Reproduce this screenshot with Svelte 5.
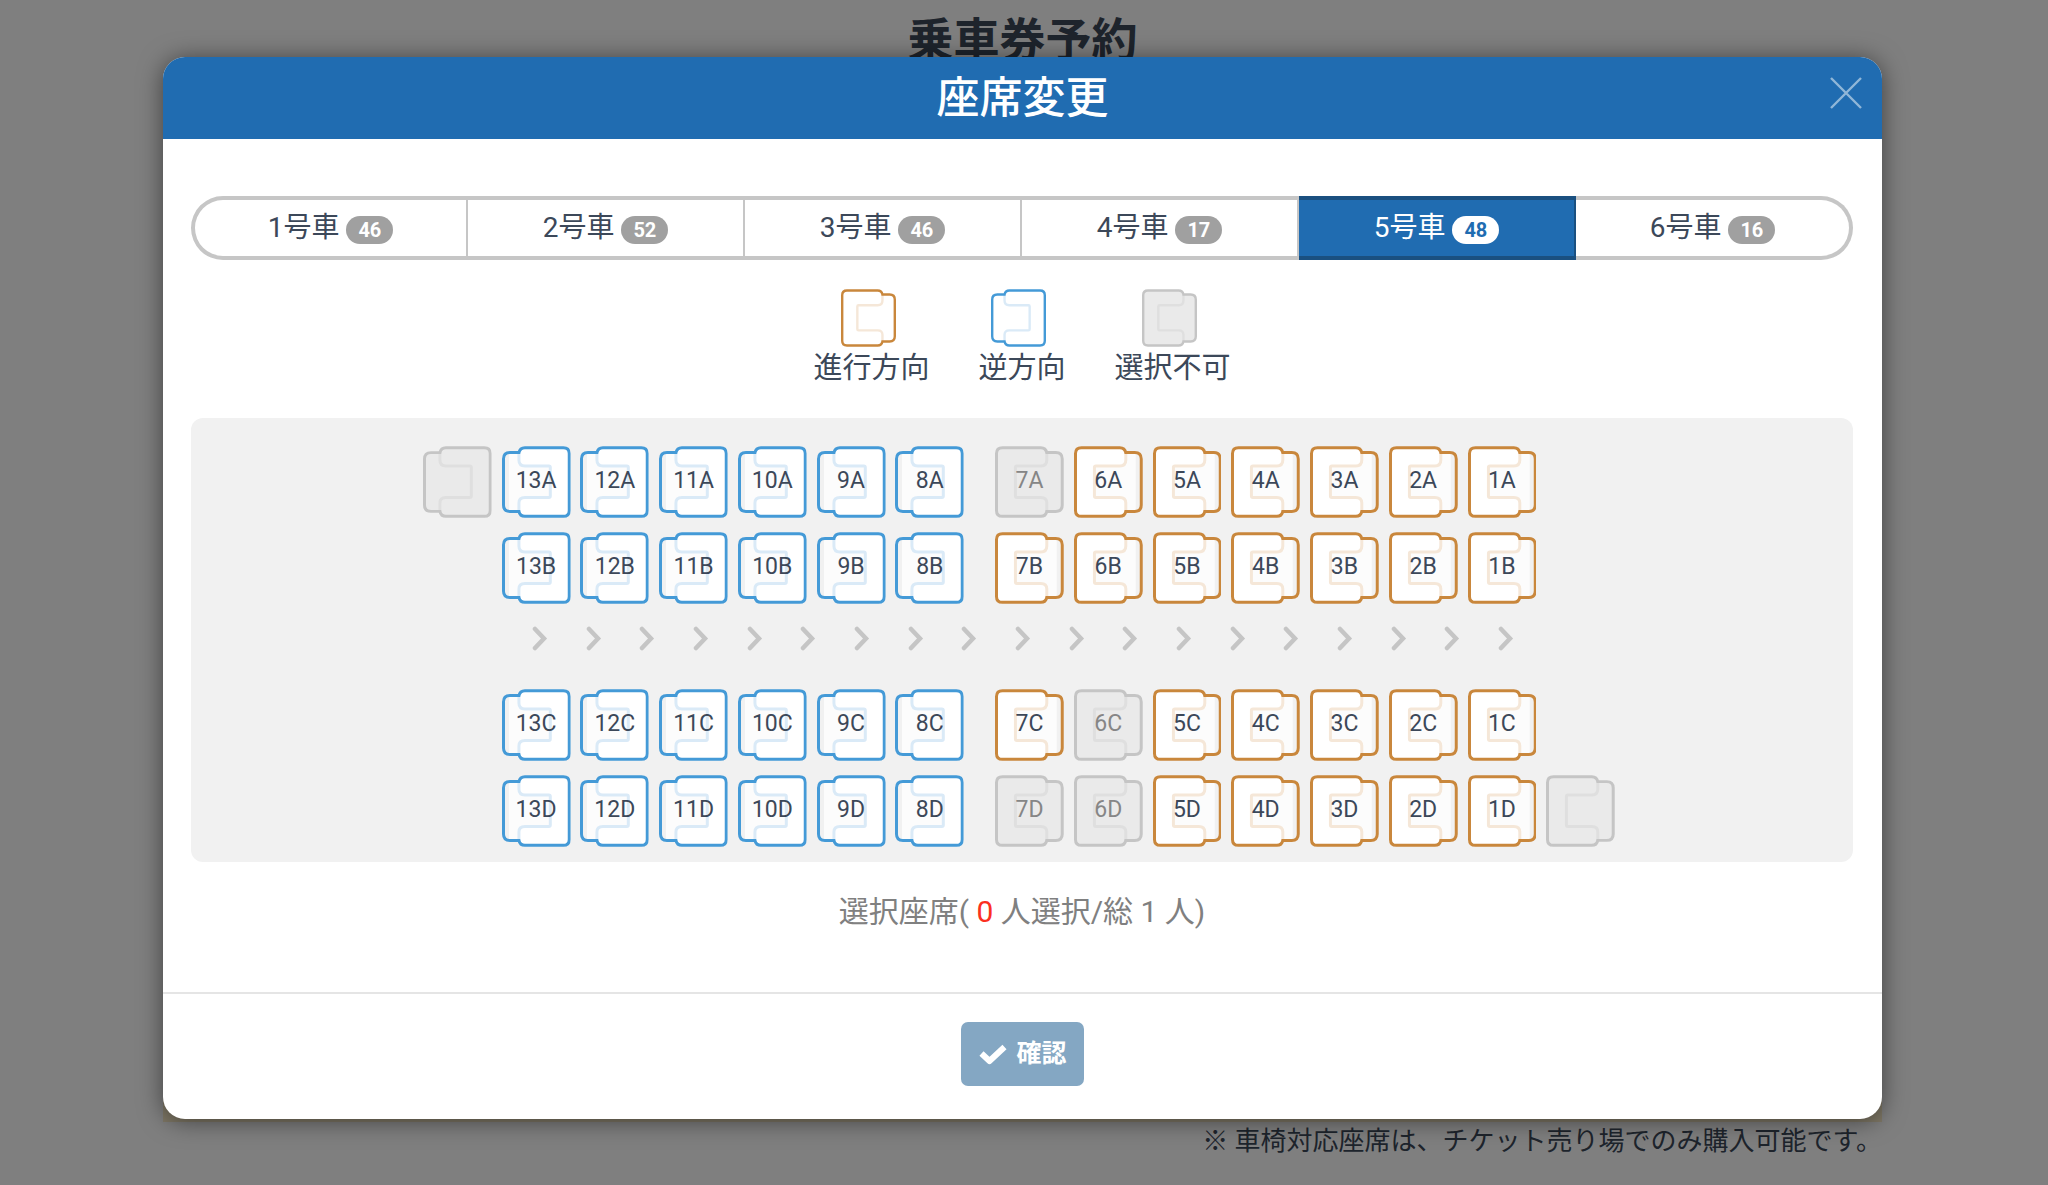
<script>
  const cars = [
    { no: 1, free: 46 },
    { no: 2, free: 52 },
    { no: 3, free: 46 },
    { no: 4, free: 17 },
    { no: 5, free: 48 },
    { no: 6, free: 16 },
  ];
  const legend = [
    { kind: 'forward', text: '進行方向' },
    { kind: 'backward', text: '逆方向' },
    { kind: 'blocked', text: '選択不可' },
  ];
  const passengers = 1;
  const taken = ['7A', '6C', '7D', '6D'];

  // Seats 13-8 face backward, 7-1 face forward; null leaves a grid cell empty.
  function buildRow(letter) {
    const seats = [];
    seats.push(letter === 'A' ? { id: '', flip: true, blocked: true } : null);
    for (let n = 13; n >= 8; n--) seats.push({ id: `${n}${letter}`, flip: true, blocked: false });
    seats.push(null);
    for (let n = 7; n >= 1; n--) {
      const id = `${n}${letter}`;
      seats.push({ id, flip: false, blocked: taken.includes(id) });
    }
    seats.push(letter === 'D' ? { id: '', flip: false, blocked: true } : null);
    return seats;
  }

  const upper = [buildRow('A'), buildRow('B')];
  const lower = [buildRow('C'), buildRow('D')];
  const arrows = Array.from({ length: 19 }, (_, i) => i);

  let car = $state(5);
  let picked = $state([]);
  let open = $state(true);

  function toggle(id) {
    if (picked.includes(id)) picked = picked.filter((p) => p !== id);
    else if (picked.length < passengers) picked = [...picked, id];
  }
</script>

{#snippet seatShape(flip)}
  <svg class="shape" class:flip viewBox="0 0 69 72" aria-hidden="true">
    <path class="fill" d="M7.5 1.5H46Q51 1.5 52 6.5H61Q67.5 6.5 67.5 13V59Q67.5 65.5 61 65.5H52Q51 70.5 46 70.5H7.5Q1.5 70.5 1.5 64.5V7.5Q1.5 1.5 7.5 1.5Z" />
    <path class="cushion" d="M52 7V14Q52 20 46 20H20.5V51.5H46Q52 51.5 52 57V65H62V7Z" />
    <path class="edge" d="M62 8H66V64H62Z" />
    <path class="inner" d="M52 7V14Q52 20 46 20H22Q20.5 20 20.5 21.5V50Q20.5 51.5 22 51.5H46Q52 51.5 52 57V65" />
    <path class="outline" d="M7.5 1.5H46Q51 1.5 52 6.5H61Q67.5 6.5 67.5 13V59Q67.5 65.5 61 65.5H52Q51 70.5 46 70.5H7.5Q1.5 70.5 1.5 64.5V7.5Q1.5 1.5 7.5 1.5Z" />
  </svg>
{/snippet}

{#snippet seatRow(row)}
  <div class="row">
    {#each row as seat, i (i)}
      {#if seat}
        <button
          type="button"
          class="seat {seat.blocked ? 'blocked' : seat.flip ? 'backward' : 'forward'}"
          class:picked={picked.includes(seat.id)}
          disabled={seat.blocked}
          aria-label={seat.id || '選択不可'}
          onclick={() => toggle(seat.id)}
        >
          {@render seatShape(seat.flip)}
          <span class="seat-id">{seat.id}</span>
        </button>
      {:else}
        <span></span>
      {/if}
    {/each}
  </div>
{/snippet}

<main class="page">
  <h1>乗車券予約</h1>
  <div class="band"></div>
  <p class="note">※ 車椅対応座席は、チケット売り場でのみ購入可能です。</p>
</main>

{#if open}
  <div class="overlay">
    <div class="modal" role="dialog" aria-modal="true" aria-labelledby="modal-title">
      <header>
        <h2 id="modal-title">座席変更</h2>
        <button type="button" class="close" aria-label="閉じる" onclick={() => (open = false)}>
          <svg viewBox="0 0 32 32" aria-hidden="true"><path d="M1 1L31 31M31 1L1 31" /></svg>
        </button>
      </header>

      <div class="body">
        <div class="tabs" role="tablist">
          {#each cars as c (c.no)}
            <button
              type="button"
              role="tab"
              class="tab"
              class:active={car === c.no}
              aria-selected={car === c.no}
              onclick={() => (car = c.no)}
            >
              <span>{c.no}号車</span>
              <span class="badge">{c.free}</span>
            </button>
          {/each}
        </div>

        <ul class="legend">
          {#each legend as item (item.kind)}
            <li class={item.kind}>
              <span class="legend-icon">{@render seatShape(item.kind === 'backward')}</span>
              <span>{item.text}</span>
            </li>
          {/each}
        </ul>

        <div class="panel">
          <div class="plan">
            {#each upper as row, i (i)}
              {@render seatRow(row)}
            {/each}
            <div class="aisle" aria-hidden="true">
              {#each arrows as a (a)}
                <svg viewBox="0 0 16 25"><path d="M3 3L12 12.5L3 22" /></svg>
              {/each}
            </div>
            {#each lower as row, i (i)}
              {@render seatRow(row)}
            {/each}
          </div>
        </div>

        <p class="summary">選択座席( <strong>{picked.length}</strong> 人選択/総 {passengers} 人)</p>
      </div>

      <footer>
        <button type="button" class="confirm" disabled={picked.length < passengers}>
          <svg viewBox="0 0 30 22" aria-hidden="true"><path d="M3.5 10.5L11.5 18L26.5 4" /></svg>
          <span>確認</span>
        </button>
      </footer>
    </div>
  </div>
{/if}

<style>
  :global(body) {
    background: #fff;
    color: #3c4859;
    font-family: Roboto, 'Noto Sans CJK JP', sans-serif;
  }

  button {
    margin: 0;
    padding: 0;
    border: 0;
    background: none;
    color: inherit;
    font: inherit;
  }

  button:not(:disabled) {
    cursor: pointer;
  }

  .page {
    display: flex;
    flex-direction: column;
    box-sizing: border-box;
    min-height: 100vh;
    padding: 0 166px 0 163px;
  }

  h1 {
    margin: 0;
    font-size: 46px;
    font-weight: 700;
    line-height: 80px;
    text-align: center;
  }

  .band {
    flex: 1;
    background: #fff0cc;
  }

  .note {
    margin: 0;
    padding-bottom: 25px;
    font-size: 26px;
    line-height: 38px;
    text-align: right;
  }

  .overlay {
    position: absolute;
    inset: 0;
    padding: 57px 166px 0 163px;
    background: rgba(0, 0, 0, 0.5);
  }

  .modal {
    overflow: hidden;
    border-radius: 22px;
    background: #fff;
    box-shadow: 0 2px 24px rgba(0, 0, 0, 0.5);
  }

  header {
    display: grid;
    grid-template-columns: 1fr auto 1fr;
    align-items: start;
    height: 82px;
    padding: 0 20px;
    background: #206cb1;
    color: #fff;
  }

  h2 {
    grid-column: 2;
    margin: 0;
    font-size: 43px;
    font-weight: 500;
    line-height: 82px;
  }

  .close {
    justify-self: end;
    width: 32px;
    height: 32px;
    margin-top: 20px;
  }

  .close svg {
    display: block;
    fill: none;
    stroke: #90b6d8;
    stroke-width: 2.4;
  }

  .body {
    padding: 57px 29px 59px 28px;
  }

  .tabs {
    display: grid;
    grid-template-columns: repeat(6, 1fr);
  }

  .tab {
    display: flex;
    align-items: center;
    justify-content: center;
    gap: 7px;
    box-sizing: border-box;
    height: 64px;
    border: 4px solid #c6c6c6;
    border-width: 4px 2px 4px 0;
    font-size: 28px;
    line-height: 38px;
  }

  .tab:first-child {
    border-left-width: 4px;
    border-radius: 32px 0 0 32px;
  }

  .tab:last-child {
    border-right-width: 4px;
    border-radius: 0 32px 32px 0;
  }

  .tab.active {
    border-color: #1a5080;
    background: #206cb1;
    color: #fff;
  }

  .badge {
    margin-top: 4px;
    padding: 0 12px;
    border-radius: 14px;
    background: #a0a0a0;
    color: #fff;
    font-size: 20px;
    font-weight: 700;
    line-height: 28px;
  }

  .active .badge {
    background: #fff;
    color: #206cb1;
  }

  .legend {
    display: flex;
    justify-content: center;
    gap: 49px;
    margin: 29px 0;
    padding: 0;
    list-style: none;
    font-size: 29px;
    line-height: 42px;
  }

  .legend li {
    display: flex;
    flex-direction: column;
    align-items: center;
  }

  .legend-icon {
    width: 55px;
    height: 58px;
    padding-right: 6px;
  }

  .shape {
    display: block;
    width: 100%;
    height: 100%;
  }

  .shape.flip {
    transform: scaleX(-1);
  }

  .fill {
    fill: #fff;
  }

  .cushion {
    fill: #fcfcfc;
  }

  .edge {
    fill: #f1f1f1;
  }

  .legend .forward path,
  .legend .backward path {
    fill: #fff;
  }

  .legend .shape .inner,
  .legend .shape .outline,
  .inner,
  .outline {
    fill: none;
    stroke-width: 3;
  }

  .forward .outline {
    stroke: #c9873c;
  }

  .forward .inner {
    stroke: #f5e7d8;
  }

  .backward .outline {
    stroke: #449ad7;
  }

  .backward .inner {
    stroke: #daeaf7;
  }

  .blocked .outline {
    stroke: #c5c5c5;
  }

  .blocked .inner {
    stroke: #dfdfdf;
  }

  .blocked .fill,
  .blocked .cushion,
  .blocked .edge {
    fill: #eaeaea;
  }

  .picked .fill,
  .picked .cushion,
  .picked .edge {
    fill: #fff0cc;
  }

  .panel {
    padding: 28px 6px 15px 0;
    border-radius: 12px;
    background: #f1f1f1;
  }

  .plan {
    display: flex;
    flex-direction: column;
    gap: 14px;
    max-width: 1192px;
    margin: 0 auto;
  }

  .row {
    display: grid;
    grid-template-columns: repeat(7, 1fr) 11px repeat(8, 1fr);
    column-gap: 10px;
  }

  .seat {
    display: grid;
    height: 72px;
  }

  .seat > * {
    grid-area: 1 / 1;
    min-width: 0;
  }

  .seat-id {
    z-index: 1;
    font-size: 23px;
    line-height: 70px;
    text-align: center;
  }

  .seat.blocked {
    color: #868686;
  }

  .aisle {
    display: flex;
    align-items: center;
    justify-content: space-between;
    height: 41px;
    margin-bottom: 16px;
    padding: 0 101px 0 109px;
  }

  .aisle svg {
    width: 16px;
    height: 25px;
    fill: none;
    stroke: #c5c5c5;
    stroke-width: 4.5;
    stroke-linecap: round;
  }

  .summary {
    margin: 29px 0 0;
    color: #808080;
    font-size: 30px;
    line-height: 42px;
    text-align: center;
  }

  .summary strong {
    color: #fb301f;
    font-weight: 400;
  }

  footer {
    display: flex;
    justify-content: center;
    padding: 28px 0 33px;
    border-top: 2px solid #e5e5e5;
  }

  .confirm {
    display: flex;
    align-items: center;
    gap: 8px;
    height: 64px;
    padding: 0 17px;
    border-radius: 7px;
    background: #206cb1;
    color: #fff;
    font-size: 25px;
    font-weight: 700;
    line-height: 36px;
  }

  .confirm:disabled {
    background: #84a7c3;
  }

  .confirm svg {
    width: 30px;
    height: 22px;
    fill: none;
    stroke: #fff;
    stroke-width: 6;
    stroke-linejoin: round;
  }
</style>
